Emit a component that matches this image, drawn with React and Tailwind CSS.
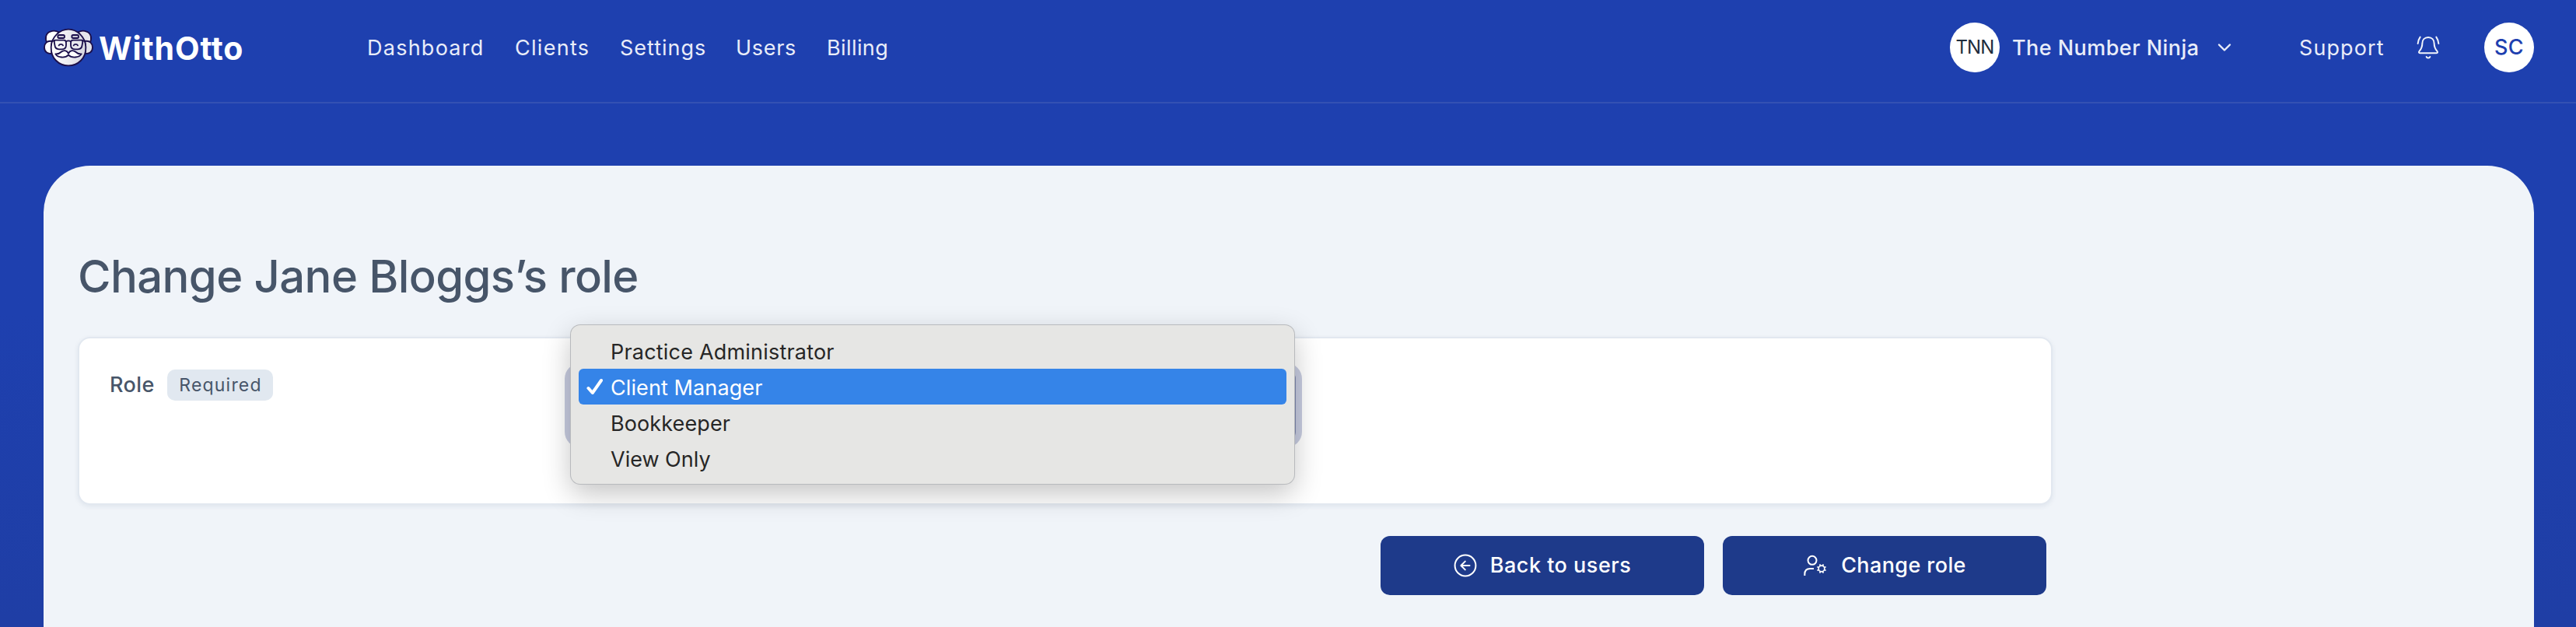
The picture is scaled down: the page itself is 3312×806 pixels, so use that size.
const navItems = [
  { label: "Dashboard", cls: "w-[190px] tracking-[1.25px]" },
  { label: "Clients", cls: "w-[135px] tracking-[1.3px]" },
  { label: "Settings", cls: "w-[149px] tracking-[1px]" },
  { label: "Users", cls: "w-[117px] tracking-[0.7px]" },
  { label: "Billing", cls: "w-[100px] tracking-[0.4px]" },
];

const roles = [
  { label: "Practice Administrator", tracking: "tracking-[0.2px]" },
  { label: "Client Manager", tracking: "tracking-[0.1px]", selected: true },
  { label: "Bookkeeper", tracking: "tracking-[0.1px]" },
  { label: "View Only", tracking: "tracking-[0px]" },
];

function OttoFace() {
  return (
    <svg width="64" height="50" viewBox="168 108 192 150" fill="none" stroke="#1b0f4b" strokeWidth="5.5" strokeLinecap="round" strokeLinejoin="round">
      <defs>
        <linearGradient id="skin" x1="0" y1="0" x2="1" y2="0">
          <stop offset="0" stopColor="#ffffff" />
          <stop offset="0.45" stopColor="#eeeef2" />
          <stop offset="1" stopColor="#d6d6df" />
        </linearGradient>
      </defs>
      <path d="M182 166C172 150 176 128 194 122C206 117 218 119 226 124L204 164Z" fill="#ffffff" />
      <path d="M346 166C356 150 352 128 334 122C322 117 310 119 302 124L324 164Z" fill="#e6e6ec" />
      <path d="M200 159C182 155 171 168 171 183C171 200 184 209 199 206Z" fill="#ffffff" />
      <path d="M328 159C346 155 357 168 357 183C357 200 344 209 329 206Z" fill="#e2e2e9" />
      <path d="M264 113C296 113 330 142 331 182C332 224 302 253 264 253C226 253 196 224 197 182C198 142 232 113 264 113Z" fill="url(#skin)" />
      <rect x="223" y="135" width="26" height="12" rx="5" fill="#c9c9d6" />
      <rect x="277" y="135" width="26" height="12" rx="5" fill="#c9c9d6" />
      <path d="M213 155H246C252 155 255 159 255 165V174C255 184 248 190 238 190H228C217 190 212 184 211 173L209 161C208 157 210 155 213 155Z" fill="#f4f4f8" />
      <path d="M315 155H282C276 155 273 159 273 165V174C273 184 280 190 290 190H300C311 190 316 184 317 173L319 161C320 157 318 155 315 155Z" fill="#e8e8ee" />
      <path d="M255 160C260 157 268 157 273 160M199 158H210M318 158H329" />
      <path d="M227 175C230 169 240 169 243 175M284 175C287 169 297 169 300 175" />
      <path d="M264 207C258 192 244 193 235 201C229 207 222 209 214 208C222 222 250 226 264 212C278 226 306 222 314 208C306 209 299 207 293 201C284 193 270 192 264 207Z" fill="#ffffff" />
    </svg>
  );
}

function BellIcon() {
  return (
    <svg width="32" height="32" viewBox="618 104 96 96" fill="none" stroke="#f1f4fb" strokeWidth="6" strokeLinecap="round" strokeLinejoin="round">
      <path d="M666 113C652 113 643 123 643 137C643 152 638 159 632 166C628 171 630 174 636 174H696C702 174 704 171 700 166C694 159 689 152 689 137C689 123 680 113 666 113Z" />
      <path d="M659 188C661 194 671 194 673 188" />
      <path d="M635 112C630 119 627 127 626 137M697 112C702 119 705 127 706 137" />
    </svg>
  );
}

function BackIcon() {
  return (
    <svg width="30" height="30" viewBox="0 0 30 30" fill="none" stroke="#ffffff" strokeWidth="2" strokeLinecap="round" strokeLinejoin="round">
      <circle cx="15" cy="15" r="13.4" />
      <path d="M20.500 15H9.500M14.800 9.600L9.400 15L14.800 20.400" />
    </svg>
  );
}

function UserGearIcon() {
  return (
    <svg width="32" height="30" viewBox="357 276 96 90" fill="none" stroke="#ffffff" strokeWidth="6">
      <circle cx="393" cy="301" r="16.5" />
      <path d="M364 360V354C364 341 372 333 385 333H399" />
      <circle cx="429" cy="333" r="11.5" strokeWidth="5" />
      <path
        d="M440 338L446 340M433.500 343.500L436 350M424.500 343.500L422 350M418 338L412 340M418 328L412 326M424.500 322.500L422 316M433.500 322.500L436 316M440 328L446 326"
        strokeWidth="5"
      />
    </svg>
  );
}

function Header() {
  return (
    <header className="h-[133px] border-b-2 border-[#3451b3] pb-[9px]">
      <div className="flex h-[122px] items-center justify-between pl-14 pr-[54px] text-[27px] leading-[40px] text-[#e9edf9]">
        <div className="flex items-center">
          <a className="flex w-[416px] items-center gap-[7px]">
            <OttoFace />
            <span className="pt-0.5 text-[41px] font-bold leading-[48px] tracking-[0.9px] text-white">WithOtto</span>
          </a>
          <nav className="flex pt-px">
            {navItems.map((item) => (
              <a key={item.label} className={`block whitespace-nowrap ${item.cls}`}>
                {item.label}
              </a>
            ))}
          </nav>
        </div>
        <div className="flex items-center">
          <div className="flex size-16 items-center justify-center rounded-full bg-white text-[24px] tracking-[-0.9px] text-[#1f2d3d]">TNN</div>
          <div className="ml-4 w-[263px] whitespace-nowrap pt-px font-medium tracking-[0.45px]">The Number Ninja</div>
          <svg width="20" height="20" viewBox="0 0 20 20" fill="none" stroke="#e9edf9" strokeWidth="2.4" strokeLinecap="round" strokeLinejoin="round">
            <path d="M3 6.500L10 13.500L17 6.500" />
          </svg>
          <a className="ml-[86px] w-[150px] pt-px tracking-[1.1px]">Support</a>
          <BellIcon />
          <div className="ml-14 flex size-16 items-center justify-center rounded-full bg-white font-medium tracking-[0.5px] text-[#1e40af]">SC</div>
        </div>
      </div>
    </header>
  );
}

function RoleMenu() {
  return (
    <div className="absolute -top-[57px] left-0 w-[930px] rounded-xl bg-[#e6e6e4] p-2.5 shadow-[0_0_0_1px_#b8babd,0_12px_36px_rgba(0,0,0,0.24)]">
      {roles.map((role) => (
        <div
          key={role.label}
          className={`flex h-[46px] items-center rounded-md text-[27px] leading-[46px] ${role.tracking} ${role.selected ? "bg-[#3584e8] text-white" : "text-[#262626]"}`}
        >
          <span className="flex w-[41px] pl-[9px]">
            {role.selected && (
              <svg width="24" height="24" viewBox="0 0 24 24" fill="none" stroke="#ffffff" strokeWidth="4" strokeLinecap="round" strokeLinejoin="round">
                <path d="M3.500 14L8.800 20L20 4" />
              </svg>
            )}
          </span>
          <span className="pt-[3px]">{role.label}</span>
        </div>
      ))}
    </div>
  );
}

export default function App() {
  return (
    <div className="flex h-[806px] w-full flex-col overflow-hidden bg-linear-to-b from-[#1e40af] from-50% to-[#1f3ea5] font-['Inter',sans-serif]">
      <Header />
      <main className="ml-14 mr-[54px] mt-20 flex-1 rounded-t-[60px] bg-[#f0f4f9] pl-11 pt-[106px]">
        <h1 className="text-[58px] font-medium leading-[72px] tracking-[-0.6px] text-[#475569]">Change Jane Bloggs’s role</h1>
        <section className="mt-[42px] flex h-[216px] w-[2539px] rounded-2xl border-2 border-[#e2e8f0] bg-white pt-10 shadow-[0_2px_6px_rgba(30,50,90,0.08)]">
          <div className="flex w-[632px] items-start pl-[39px] text-[#475569]">
            <label className="w-[74px] text-[27px] font-medium leading-[39px] tracking-[0.4px]">Role</label>
            <span className="flex h-10 w-[136px] items-center justify-center rounded-[10px] bg-[#e1e8f0] pl-px text-[23px] tracking-[1.2px]">Required</span>
          </div>
          <div className="relative h-[92px] w-[932px] rounded-xl border-2 border-[#7f89b0] bg-white ring-8 ring-[#c7cce0]">
            <div className="relative -left-0.5 -top-0.5">
              <RoleMenu />
            </div>
          </div>
        </section>
        <div className="mt-10 flex w-[2531px] justify-end gap-6 text-[27px] font-medium text-white">
          <button className="flex h-[76px] w-[416px] items-center justify-center gap-[17px] rounded-xl bg-[#1e3a8a] tracking-[0.5px]">
            <BackIcon />
            Back to users
          </button>
          <button className="flex h-[76px] w-[416px] items-center justify-center gap-[17px] rounded-xl bg-[#1e3a8a] tracking-[0.4px]">
            <UserGearIcon />
            Change role
          </button>
        </div>
      </main>
    </div>
  );
}
